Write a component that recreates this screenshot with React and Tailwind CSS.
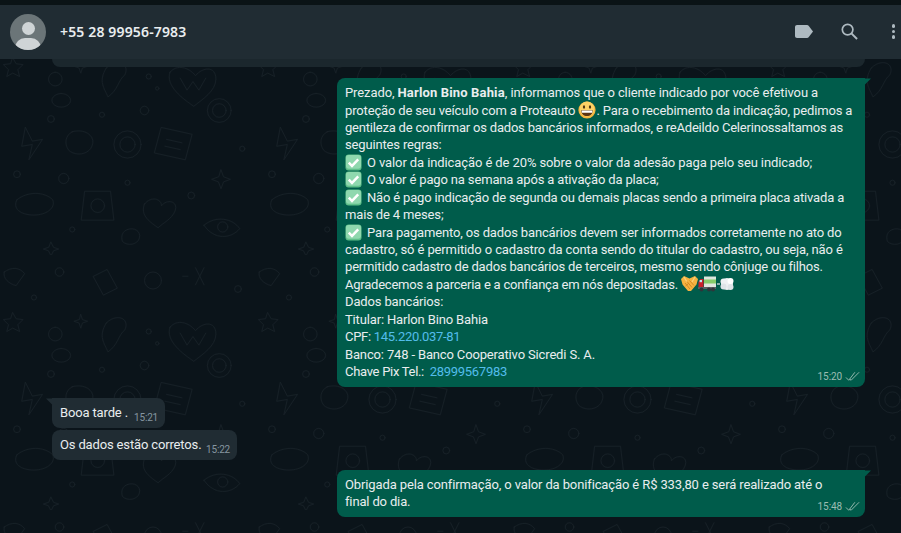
import React from "react";

function Doodles() {
  return (
    <svg className="absolute inset-0 h-full w-full" aria-hidden="true">
      <defs>
        <pattern id="doodle" width="300" height="300" patternUnits="userSpaceOnUse" patternTransform="scale(0.85)">
          <g fill="none" stroke="#172027" strokeWidth="1.1" strokeLinejoin="round" strokeLinecap="round">
            <path d="M15 68l4 7 8 1-6 6 2 8-8-4-7 4 2-8-6-6 8-1z" />
            <path d="M65 85a8 8 0 1 0 .1 0M72 110a11 8 0 1 0 .1 0" />
            <path d="M95 70l2 6 6 2-6 2-2 6-2-6-6-2 6-2z" />
            <path d="M125 80c12-12 28-6 22 8-8 6-8 18-20 26-4-10-12-18-2-34z" />
            <path d="M200 85c8-10 22-6 30 4 8-10 24-12 24 4 0 14-16 24-26 32-12-8-34-24-28-40z" />
            <path d="M212 92l8 14 7-10 7 10 8-14" />
            <circle cx="258" cy="130" r="14" />
            <circle cx="258" cy="130" r="8" />
            <circle cx="175" cy="90" r="3" />
            <circle cx="185" cy="104" r="2" />
            <circle cx="40" cy="50" r="3" />
            <path d="M30 150l8 16 12-2-16 24 4-18-12 2z" />
            <path d="M85 155c14-4 26 4 24 14-2 12-18 16-28 8-6-8-4-18 4-22z" />
            <circle cx="150" cy="170" r="16" />
            <circle cx="150" cy="170" r="9" />
            <path d="M190 150l36 8-8 30-36-8z" />
            <path d="M196 164l18 4M194 172l18 4" />
            <path d="M260 200l3 8 8 3-8 3-3 8-3-8-8-3 8-3z" />
            <path d="M20 235c12-10 32-10 42 0 4 10-8 18-22 18-16 0-26-8-20-18z" />
            <path d="M100 225h30l4 34h-38z" />
            <circle cx="115" cy="242" r="8" />
            <path d="M170 240c8-10 20-6 20 2 6-8 20-6 16 6-4 10-14 14-20 20-8-6-22-14-16-28z" />
            <path d="M240 265c14-12 34-8 42 4-10 12-30 14-42-4z" />
            <circle cx="262" cy="267" r="6" />
            <circle cx="85" cy="270" r="3" />
            <circle cx="225" cy="230" r="4" />
            <path d="M5 20c8-6 18-6 24 2l-10 14c-8-2-16-8-14-16z" />
            <path d="M110 25l16-8 12 22-16 8z" />
            <circle cx="180" cy="30" r="10" />
            <path d="M230 15l10 20M240 15l-10 20M215 25h6" />
            <circle cx="280" cy="40" r="4" />
            <circle cx="70" cy="20" r="5" />
            <circle cx="60" cy="140" r="4" />
            <circle cx="120" cy="135" r="3" />
            <circle cx="170" cy="130" r="5" />
            <circle cx="285" cy="175" r="3" />
            <circle cx="20" cy="205" r="4" />
            <circle cx="75" cy="210" r="6" />
            <circle cx="150" cy="215" r="3" />
            <path d="M60 285l3 6 6 2-6 2-3 6-3-6-6-2 6-2z" />
            <path d="M150 270c8-3 16 2 14 10s-14 10-20 4c-2-6 0-12 6-14z" />
          </g>
        </pattern>
      </defs>
      <rect width="100%" height="100%" fill="url(#doodle)" />
    </svg>
  );
}

function CheckEmoji() {
  return (
    <svg viewBox="0 0 18 18" className="mr-[5px] inline-block h-[17px] w-[17px] align-[-4px]">
      <rect x="0.5" y="0.5" width="17" height="17" rx="3.5" fill="#5fbf8a" />
      <rect x="1" y="1" width="16" height="14.5" rx="3" fill="#8fd8ae" />
      <path d="M4 9.2l3.4 3.4L14 5.6" fill="none" stroke="#fff" strokeWidth="2.6" />
    </svg>
  );
}

function GrinEmoji() {
  return (
    <svg viewBox="0 0 18 18" className="inline-block h-[18px] w-[18px] align-[-4px]">
      <circle cx="9" cy="9" r="8.6" fill="#f5b53f" />
      <circle cx="9" cy="8" r="7.4" fill="#fbd265" />
      <ellipse cx="6" cy="6" rx="1.1" ry="1.7" fill="#4a3210" />
      <ellipse cx="12" cy="6" rx="1.1" ry="1.7" fill="#4a3210" />
      <path d="M3.2 9.2h11.6c0 3.6-2.4 5.8-5.8 5.8s-5.8-2.2-5.8-5.8z" fill="#5b3312" />
      <path d="M3.6 9.4h10.8v2.4H3.8z" fill="#fff" />
    </svg>
  );
}

function HandshakeEmoji() {
  return (
    <svg viewBox="0 0 17 16" className="inline-block h-[16px] w-[17px] align-[-3px]">
      <path d="M0 3l3-3 5.500 2.500L14 0l3 3-1.500 5.500L10 15H7L1.500 8.500z" fill="#f5b240" />
      <path d="M3 1l3 5M14 1l-3 5" stroke="#fbd27a" strokeWidth="1.200" fill="none" />
      <path d="M4 7l5 6M6 5.500l5 6M8.500 4.500l4.500 5M4.500 10l3-2.500" stroke="#cc8423" strokeWidth="0.900" fill="none" />
    </svg>
  );
}

function TruckEmoji() {
  return (
    <svg viewBox="0 0 18 16" className="inline-block h-[16px] w-[18px] align-[-3px]">
      <rect x="6" y="0.500" width="12" height="11" fill="#dfe6de" />
      <rect x="6" y="3.500" width="12" height="4" fill="#86cb69" />
      <path d="M0.500 6l2-3h3v9h-5z" fill="#c8202c" />
      <rect x="1.600" y="4" width="2.400" height="2.200" fill="#bfe2ef" />
      <rect x="0" y="11" width="18" height="2" fill="#5a5f63" />
      <circle cx="3.500" cy="13.500" r="2" fill="#30353a" />
      <circle cx="11" cy="13.500" r="2" fill="#30353a" />
      <circle cx="15" cy="13.500" r="2" fill="#30353a" />
    </svg>
  );
}

function DashEmoji() {
  return (
    <svg viewBox="0 0 17 16" className="ml-[1px] inline-block h-[16px] w-[17px] align-[-3px]">
      <circle cx="10" cy="8" r="6" fill="#eef1f3" />
      <circle cx="6.500" cy="5.500" r="3" fill="#eef1f3" />
      <circle cx="6.500" cy="10.500" r="3" fill="#dfe4e8" />
      <circle cx="13.500" cy="5" r="3" fill="#fff" />
      <circle cx="13.500" cy="11" r="3" fill="#dfe4e8" />
      <path d="M0 8h3" stroke="#dfe4e8" strokeWidth="1.200" />
    </svg>
  );
}

function DoubleCheck() {
  return (
    <svg viewBox="0 0 16 11" className="h-[11px] w-[15px]" fill="none" stroke="#9cbdb2" strokeWidth="1">
      <path d="M1 6.500l3 3L10.500 1" />
      <path d="M6.500 9.500L15 1" />
      <path d="M5.200 8.400l1.300 1.100" />
    </svg>
  );
}

function Line({ children, className = "" }) {
  return <div className={`h-[17.45px] whitespace-nowrap leading-[17.45px] ${className}`}>{children}</div>;
}

function SentTail() {
  return (
    <svg viewBox="0 0 8 8" className="absolute right-[-6px] top-0 h-[8px] w-[7px]">
      <path d="M0 0h8L0 8z" fill="#005c4b" />
    </svg>
  );
}

function ReceivedTail() {
  return (
    <svg viewBox="0 0 8 8" className="absolute left-[-6px] top-0 h-[8px] w-[7px]">
      <path d="M8 0H0l8 8z" fill="#202c33" />
    </svg>
  );
}

export default function App() {
  return (
    <div className="relative flex h-[533px] w-[901px] flex-col overflow-hidden bg-[#0b141a] font-['Roboto',sans-serif] text-[13px] tracking-[-0.15px] text-[#e9edef]">
      <Doodles />

      {/* Header */}
      <div className="relative h-[5px] bg-[#0a1316]" />
      <header className="relative flex h-[54px] items-center bg-[#202c33] pb-[1px] pl-[10px]">
        <div className="relative h-9 w-9 overflow-hidden rounded-full bg-[#6b7578]">
          <div className="absolute left-[12px] top-[8px] h-[13px] w-[13px] rounded-full bg-[#cfd4d6]" />
          <div className="absolute left-[5px] top-[24px] h-[20px] w-[26px] rounded-full bg-[#cfd4d6]" />
        </div>
        <div className="ml-[14px] font-['Noto_Sans',sans-serif] text-[14px] font-semibold tracking-[0.15px] text-[#e9edef]">
          +55 28 99956-7983
        </div>
        <div className="ml-auto flex items-center text-[#aebac1]">
          <svg viewBox="0 0 18 13" className="mr-[28px] h-[13px] w-[18px]">
            <path d="M2 0h10c.7 0 1.200.3 1.600.8L18 6.500l-4.400 5.700c-.4.5-.9.8-1.600.8H2c-1.100 0-2-.9-2-2V2C0 .9.9 0 2 0z" fill="currentColor" />
          </svg>
          <svg viewBox="0 0 18 18" className="mr-[34px] h-[17px] w-[17px]" fill="none" stroke="currentColor" strokeWidth="1.800">
            <circle cx="7" cy="7" r="5.600" />
            <path d="M11 11l6 6" strokeWidth="2.100" />
          </svg>
          <div className="mr-[6px] flex flex-col gap-[2px]">
            <div className="h-[3.5px] w-[3.5px] rounded-full bg-current" />
            <div className="h-[3.5px] w-[3.5px] rounded-full bg-current" />
            <div className="h-[3.5px] w-[3.5px] rounded-full bg-current" />
          </div>
        </div>
      </header>

      {/* Messages */}
      <main className="relative flex flex-1 flex-col">
        <div className="ml-[52px] mr-[36px] h-[8px] rounded-b-lg bg-[#1b272d]" />

        <div className="mr-[36px] mt-[11px] flex justify-end">
          <div className="relative h-[309px] w-[528px] rounded-lg rounded-tr-none bg-[#005c4b] px-2 pt-[6px]">
            <SentTail />
            <Line className="tracking-[-0.1px]">
              Prezado, <b className="font-bold tracking-[0.15px]">Harlon Bino Bahia</b>, informamos que o cliente indicado por você efetivou a
            </Line>
            <Line>
              proteção de seu veículo com a Proteauto <GrinEmoji />. Para o recebimento da indicação, pedimos a
            </Line>
            <Line className="tracking-[-0.2px]">gentileza de confirmar os dados bancários informados, e reAdeildo Celerinossaltamos as</Line>
            <Line>seguintes regras:</Line>
            <Line className="tracking-[-0.1px]"><CheckEmoji />O valor da indicação é de 20% sobre o valor da adesão paga pelo seu indicado;</Line>
            <Line><CheckEmoji />O valor é pago na semana após a ativação da placa;</Line>
            <Line className="tracking-[-0.17px]"><CheckEmoji />Não é pago indicação de segunda ou demais placas sendo a primeira placa ativada a</Line>
            <Line>mais de 4 meses;</Line>
            <Line><CheckEmoji />Para pagamento, os dados bancários devem ser informados corretamente no ato do</Line>
            <Line className="tracking-[-0.12px]">cadastro, só é permitido o cadastro da conta sendo do titular do cadastro, ou seja, não é</Line>
            <Line className="tracking-[-0.17px]">permitido cadastro de dados bancários de terceiros, mesmo sendo cônjuge ou filhos.</Line>
            <Line className="tracking-[-0.23px]">
              Agradecemos a parceria e a confiança em nós depositadas. <HandshakeEmoji /><TruckEmoji /><DashEmoji />
            </Line>
            <Line>Dados bancários:</Line>
            <Line>Titular: Harlon Bino Bahia</Line>
            <Line className="tracking-[-0.3px]">CPF: <span className="text-[#53bdeb]">145.220.037-81</span></Line>
            <Line>Banco: 748 - Banco Cooperativo Sicredi S. A.</Line>
            <Line className="tracking-[-0.3px]">Chave Pix Tel.:&nbsp; <span className="text-[#53bdeb]">28999567983</span></Line>
            <div className="absolute bottom-[3px] right-[5px] flex items-center gap-[3px] text-[10px] tracking-[-0.1px] text-[#9cbdb2]">
              15:20 <DoubleCheck />
            </div>
          </div>
        </div>

        <div className="ml-[52px] mt-[11px] flex flex-col items-start gap-[2px]">
          <div className="relative flex h-[30px] w-[113px] items-center rounded-lg rounded-tl-none bg-[#202c33] pl-2">
            <ReceivedTail />
            Booa tarde .
            <span className="absolute bottom-[3px] right-[7px] text-[10px] tracking-[-0.2px] text-[#8696a0]">15:21</span>
          </div>
          <div className="relative flex h-[30px] w-[185px] items-center rounded-lg bg-[#202c33] pl-2">
            Os dados estão corretos.
            <span className="absolute bottom-[3px] right-[7px] text-[10px] tracking-[-0.2px] text-[#8696a0]">15:22</span>
          </div>
        </div>

        <div className="mr-[36px] mt-[10px] flex justify-end">
          <div className="relative h-[47px] w-[528px] rounded-lg rounded-tr-none bg-[#005c4b] px-2 pt-[6px]">
            <SentTail />
            <Line className="tracking-[-0.12px]">Obrigada pela confirmação, o valor da bonificação é R$ 333,80 e será realizado até o</Line>
            <Line>final do dia.</Line>
            <div className="absolute bottom-[3px] right-[5px] flex items-center gap-[3px] text-[10px] tracking-[-0.1px] text-[#9cbdb2]">
              15:48 <DoubleCheck />
            </div>
          </div>
        </div>
      </main>
    </div>
  );
}
